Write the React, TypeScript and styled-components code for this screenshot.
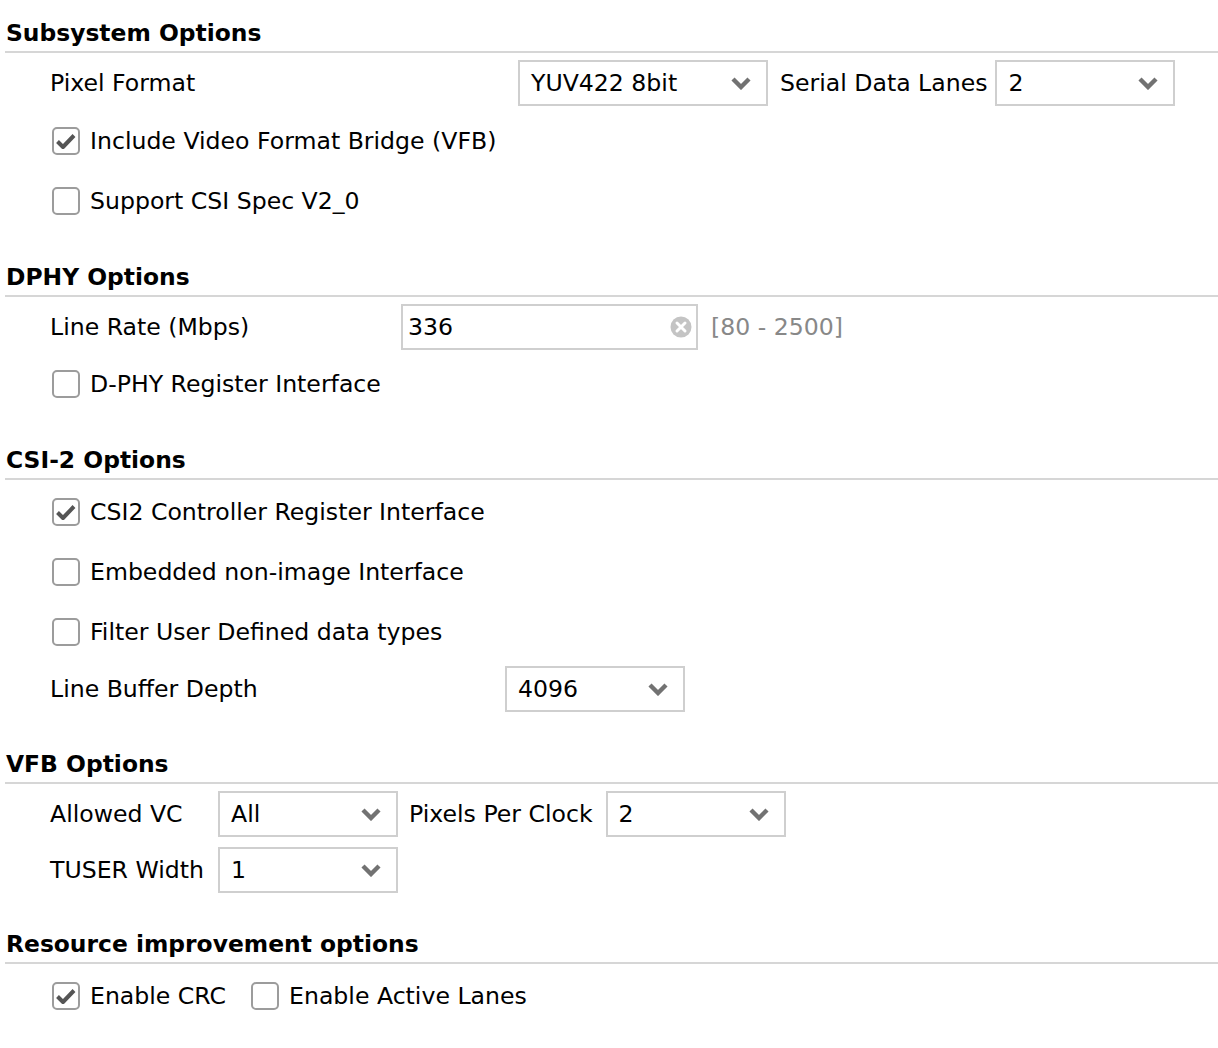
import React from 'react';
import styled, { createGlobalStyle } from 'styled-components';

const GlobalStyle = createGlobalStyle`
  body {
    margin: 0;
    background: #ffffff;
    font-family: "DejaVu Sans", "Noto Sans", sans-serif;
    font-size: 23.6px;
    color: #000;
  }
`

const Page = styled.div`
  padding: 19px 0 20px 5px;
  display: flex;
  flex-direction: column;
`

const Section = styled.section<{ $top?: number }>`
  display: flex;
  flex-direction: column;
  margin-top: ${p => p.$top || 0}px;
`

const Heading = styled.div`
  font-weight: bold;
  font-size: 23.4px;
  line-height: 28px;
  padding: 0 0 4px 1px;
  border-bottom: 2px solid #d6d6d6;
`

const Body = styled.div<{ $top: number }>`
  display: flex;
  flex-direction: column;
  align-items: flex-start;
  padding-left: 45px;
  margin-top: ${p => p.$top}px;
`

const Row = styled.div<{ $top?: number }>`
  display: flex;
  align-items: center;
  height: 46px;
  margin-top: ${p => p.$top || 0}px;
  white-space: nowrap;
`

const Label = styled.div<{ $width?: number }>`
  width: ${p => (p.$width ? `${p.$width}px` : 'auto')};
  flex: none;
  line-height: 28px;
`

const SideLabel = styled.div`
  margin: 0 8px 0 12px;
  line-height: 28px;
`

const Grid = styled.div`
  display: grid;
  grid-template-columns: max-content 180px max-content 180px;
  grid-auto-rows: 46px;
  row-gap: 10px;
  align-items: center;
  white-space: nowrap;
`

const GridLabel = styled.div`
  margin-right: 14px;
  line-height: 28px;
`

const GridSideLabel = styled.div`
  margin: 0 13px 0 11px;
  line-height: 28px;
`

const SelectBox = styled.div<{ $width: number }>`
  box-sizing: border-box;
  width: ${p => p.$width}px;
  height: 46px;
  border: 2px solid #cfcfcf;
  display: flex;
  align-items: center;
  justify-content: space-between;
  padding: 0 14px 0 11px;
  background: #fff;
  flex: none;
`

const TextBox = styled.div`
  box-sizing: border-box;
  width: 297px;
  height: 46px;
  border: 2px solid #cfcfcf;
  display: flex;
  align-items: center;
  justify-content: space-between;
  padding: 0 4px 0 5px;
  flex: none;
`

const Range = styled.span`
  color: #888;
  margin-left: 13px;
  line-height: 28px;
`

const CheckRow = styled.label`
  display: flex;
  align-items: center;
  cursor: pointer;
  & + & {
    margin-left: 23px;
  }
`

const Box = styled.span`
  box-sizing: border-box;
  width: 28px;
  height: 28px;
  margin: 0 10px 0 2px;
  border: 2px solid #9c9c9c;
  border-radius: 5px;
  display: flex;
  align-items: center;
  justify-content: center;
  background: #fff;
  flex: none;
`

const Chevron = () => (
  <svg width="22" height="14" viewBox="0 0 22 14">
    <polyline points="3,3 11,11 19,3" fill="none" stroke="#727272" strokeWidth="4.4" strokeLinejoin="miter" />
  </svg>
)

const ClearIcon = () => (
  <svg width="22" height="22" viewBox="0 0 22 22">
    <circle cx="11" cy="11" r="10.5" fill="#c4c4c4" />
    <path d="M7 7 L15 15 M15 7 L7 15" stroke="#fff" strokeWidth="3" strokeLinecap="round" />
  </svg>
)

const Select = ({ value, width }: { value: string, width: number }) => (
  <SelectBox $width={width}>
    <span>{value}</span>
    <Chevron />
  </SelectBox>
)

const Check = ({ label, checked }: { label: string, checked?: boolean }) => (
  <CheckRow>
    <Box>
      {checked &&
        <svg width="24" height="24" viewBox="0 0 24 24">
          <polyline points="3.5,12.5 9,18 20,6.5" fill="none" stroke="#555" strokeWidth="4" strokeLinejoin="round" />
        </svg>}
    </Box>
    {label}
  </CheckRow>
)

const App: React.FC = () => {
  return (
    <Page>
      <GlobalStyle />
      <Section>
        <Heading>Subsystem Options</Heading>
        <Body $top={7}>
          <Row>
            <Label $width={468}>Pixel Format</Label>
            <Select value="YUV422 8bit" width={250} />
            <SideLabel>Serial Data Lanes</SideLabel>
            <Select value="2" width={180} />
          </Row>
          <Row $top={12}>
            <Check label="Include Video Format Bridge (VFB)" checked />
          </Row>
          <Row $top={14}>
            <Check label="Support CSI Spec V2_0" />
          </Row>
        </Body>
      </Section>

      <Section $top={39}>
        <Heading>DPHY Options</Heading>
        <Body $top={7}>
          <Row>
            <Label $width={351}>Line Rate (Mbps)</Label>
            <TextBox>
              <span>336</span>
              <ClearIcon />
            </TextBox>
            <Range>[80 - 2500]</Range>
          </Row>
          <Row $top={11}>
            <Check label="D-PHY Register Interface" />
          </Row>
        </Body>
      </Section>

      <Section $top={39}>
        <Heading>CSI-2 Options</Heading>
        <Body $top={9}>
          <Row>
            <Check label="CSI2 Controller Register Interface" checked />
          </Row>
          <Row $top={14}>
            <Check label="Embedded non-image Interface" />
          </Row>
          <Row $top={14}>
            <Check label="Filter User Defined data types" />
          </Row>
          <Row $top={11}>
            <Label $width={455}>Line Buffer Depth</Label>
            <Select value="4096" width={180} />
          </Row>
        </Body>
      </Section>

      <Section $top={38}>
        <Heading>VFB Options</Heading>
        <Body $top={7}>
          <Grid>
            <GridLabel>Allowed VC</GridLabel>
            <Select value="All" width={180} />
            <GridSideLabel>Pixels Per Clock</GridSideLabel>
            <Select value="2" width={180} />
            <GridLabel>TUSER Width</GridLabel>
            <Select value="1" width={180} />
          </Grid>
        </Body>
      </Section>

      <Section $top={37}>
        <Heading>Resource improvement options</Heading>
        <Body $top={9}>
          <Row>
            <Check label="Enable CRC" checked />
            <Check label="Enable Active Lanes" />
          </Row>
        </Body>
      </Section>
    </Page>
  )
}

export default App;
